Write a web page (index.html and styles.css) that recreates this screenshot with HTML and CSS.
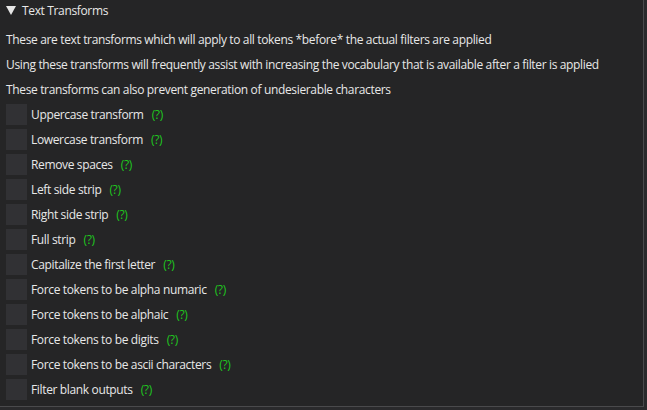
FILE: index.html
```html
<!DOCTYPE html>
<html>
<head>
<meta charset="utf-8">
<link rel="stylesheet" href="styles.css">
</head>
<body>
<div class="panel">
  <div class="header">
    <svg class="arrow" width="10" height="9" viewBox="0 0 10 9"><polygon points="0,0 10,0 5,9" fill="#e6e6e6"/></svg>
    <span>Text Transforms</span>
  </div>
  <div class="content">
    <p class="line">These are text transforms which will apply to all tokens *before* the actual filters are applied</p>
    <p class="line">Using these transforms will frequently assist with increasing the vocabulary that is available after a filter is applied</p>
    <p class="line">These transforms can also prevent generation of undesierable characters</p>
    <div class="row"><span class="box"></span><span class="label">Uppercase transform</span><span class="help">(?)</span></div>
    <div class="row"><span class="box"></span><span class="label">Lowercase transform</span><span class="help">(?)</span></div>
    <div class="row"><span class="box"></span><span class="label">Remove spaces</span><span class="help">(?)</span></div>
    <div class="row"><span class="box"></span><span class="label">Left side strip</span><span class="help">(?)</span></div>
    <div class="row"><span class="box"></span><span class="label">Right side strip</span><span class="help">(?)</span></div>
    <div class="row"><span class="box"></span><span class="label">Full strip</span><span class="help">(?)</span></div>
    <div class="row"><span class="box"></span><span class="label">Capitalize the first letter</span><span class="help">(?)</span></div>
    <div class="row"><span class="box"></span><span class="label">Force tokens to be alpha numaric</span><span class="help">(?)</span></div>
    <div class="row"><span class="box"></span><span class="label">Force tokens to be alphaic</span><span class="help">(?)</span></div>
    <div class="row"><span class="box"></span><span class="label">Force tokens to be digits</span><span class="help">(?)</span></div>
    <div class="row"><span class="box"></span><span class="label">Force tokens to be ascii characters</span><span class="help">(?)</span></div>
    <div class="row"><span class="box"></span><span class="label">Filter blank outputs</span><span class="help">(?)</span></div>
  </div>
</div>
</body>
</html>
```

FILE: styles.css
```css
html, body {
  margin: 0;
  padding: 0;
  background: #2a2a2c;
}
body {
  width: 647px;
  height: 410px;
  overflow: hidden;
  font-family: "Open Sans", "DejaVu Sans", sans-serif;
  font-size: 12px;
  letter-spacing: -0.35px;
  color: #e8e8e8;
}
.panel {
  width: 643px;
  height: 406px;
  background: #252526;
  border-right: 1px solid #4a4a4c;
  border-bottom: 1px solid #4a4a4c;
  box-sizing: content-box;
}
.header {
  height: 20px;
  display: flex;
  align-items: center;
  padding-left: 6px;
  gap: 6px;
}
.arrow {
  display: block;
}
.content {
  padding: 9px 6px 0 6px;
  display: flex;
  flex-direction: column;
  gap: 4px;
}
.line {
  margin: 0;
  height: 21px;
  line-height: 21px;
  white-space: nowrap;
}
.row {
  height: 21px;
  display: flex;
  align-items: center;
  white-space: nowrap;
}
.box {
  width: 21px;
  height: 21px;
  background: #313134;
  margin-right: 4px;
  flex: none;
}
.help {
  color: #1fc71f;
  margin-left: 8px;
}
```
